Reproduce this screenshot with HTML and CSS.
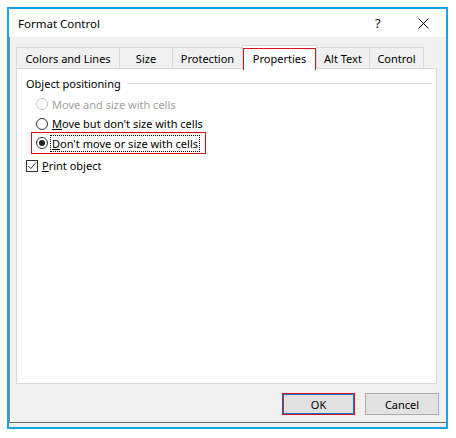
FILE: index.html
```html
<!DOCTYPE html>
<html>
<head>
<meta charset="utf-8">
<link rel="stylesheet" href="styles.css">
</head>
<body>
<div class="window">
  <div class="titlebar">
    <span class="title">Format Control</span>
    <span class="help">?</span>
    <span class="close"><svg width="11" height="11" viewBox="0 0 11 11"><path d="M0.5 0.5 L10.5 10.5 M10.5 0.5 L0.5 10.5" stroke="#000" stroke-width="1" fill="none"/></svg></span>
  </div>
  <div class="frame">
    <div class="tabs">
      <div class="tab t1">Colors and Lines</div>
      <div class="tab t2">Size</div>
      <div class="tab t3">Protection</div>
      <div class="tab active"><span class="mark">Properties</span></div>
      <div class="tab t5">Alt Text</div>
      <div class="tab t6">Control</div>
    </div>
    <div class="panel">
      <div class="group-head"><span>Object positioning</span><span class="rule"></span></div>
      <div class="opt disabled row1"><span class="radio"></span><span>Move and size with cells</span></div>
      <div class="opt row2"><span class="radio"></span><span><u>M</u>ove but don't size with cells</span></div>
      <div class="highlight"><span class="radio checked"></span><span class="focus"><u>D</u>on't move or size with cells</span></div>
      <div class="check-row"><span class="checkbox"><svg width="12" height="12" viewBox="0 0 12 12"><path d="M1.5 6 L4.5 9.2 L10.5 2" stroke="#222" stroke-width="1.1" fill="none"/></svg></span><span><u>P</u>rint object</span></div>
    </div>
    <div class="buttons">
      <button class="btn ok">OK</button>
      <button class="btn cancel">Cancel</button>
    </div>
  </div>
</div>
</body>
</html>
```
FILE: styles.css
```css
* { box-sizing: border-box; }
body {
  margin: 0;
  background: #fff;
  font-family: "Noto Sans", "Open Sans", sans-serif;
  font-size: 11px;
  color: #000;
}
.window {
  margin: 7px 0 0 7px;
  width: 441px;
  height: 422px;
  border: 2px solid #17a2e5;
  background: #f0f0f0;
  display: flex;
  flex-direction: column;
}
.titlebar {
  flex: none;
  height: 28px;
  background: #fff;
  display: flex;
  align-items: center;
}
.title {
  margin-left: 9px;
  font-size: 11.5px;
}
.help {
  margin-left: auto;
  font-size: 13px;
  width: 8px;
}
.close {
  display: flex;
  margin-left: 35px;
  margin-right: 17px;
}
.frame {
  flex: none;
  height: 386px;
  border-left: 1px solid #8c8c8c;
  border-bottom: 1px solid #6e6e6e;
  padding: 8px 7px 7px 6px;
  display: flex;
  flex-direction: column;
}
.tabs {
  display: flex;
  align-items: flex-end;
  height: 23px;
  flex: none;
}
.tab {
  height: 21px;
  border-top: 1px solid #d9d9d9;
  border-left: 1px solid #d9d9d9;
  display: flex;
  align-items: center;
  justify-content: center;
  background: #f0f0f0;
  white-space: nowrap;
}
.t1 { width: 103px; }
.t2 { width: 53px; }
.t3 { width: 70px; }
.active {
  width: 75px;
  height: 24px;
  margin-bottom: -1px;
  border-right: 1px solid #d9d9d9;
  background: #fff;
  position: relative;
  z-index: 1;
  align-items: flex-start;
  padding-top: 1px;
}
.mark {
  display: flex;
  align-items: center;
  justify-content: center;
  width: 73px;
  height: 22px;
  border: 1px solid #e0101a;
  border-bottom: none;
  margin-top: 1px;
  padding-bottom: 2px;
}
.t5 { width: 52px; border-left: none; }
.t6 { width: 55px; border-right: 1px solid #d9d9d9; }
.panel {
  flex: none;
  width: 421px;
  height: 316px;
  border: 1px solid #d9d9d9;
  background: #fff;
  padding: 6px 0 0 9px;
}
.group-head {
  display: flex;
  align-items: center;
  height: 16px;
}
.rule {
  flex: 1;
  height: 1px;
  background: #dcdcdc;
  margin-left: 6px;
  margin-right: 4px;
}
.opt {
  display: flex;
  align-items: center;
  margin-left: 10px;
}
.row1 { margin-top: 5px; height: 16px; }
.row2 { margin-top: 3px; height: 17px; }
.radio {
  flex: none;
  width: 12px;
  height: 12px;
  border: 1px solid #333;
  border-radius: 50%;
  background: #fff;
  margin-right: 4px;
  display: flex;
  align-items: center;
  justify-content: center;
}
.disabled { color: #a0a0a0; }
.disabled .radio { border-color: #c6c6c6; }
.checked::after {
  content: "";
  width: 6px;
  height: 6px;
  border-radius: 50%;
  background: #222;
}
.highlight {
  display: flex;
  width: fit-content;
  align-items: center;
  height: 22px;
  border: 1px solid #e0101a;
  margin-left: 5px;
  padding: 0 5px 0 4px;
}
.highlight .radio { margin-right: 2px; }
.focus {
  border: 1px dotted #000;
  padding: 0 1px;
  line-height: 15px;
}
.check-row {
  display: flex;
  align-items: center;
  height: 23px;
}
.checkbox {
  flex: none;
  width: 12px;
  height: 12px;
  border: 1px solid #333;
  margin-right: 4px;
  display: flex;
  align-items: center;
  justify-content: center;
  background: #fff;
}
.checkbox svg { display: block; }
.buttons {
  display: flex;
  justify-content: flex-end;
  gap: 10px;
  margin-top: 9px;
}
.btn {
  height: 22px;
  border: 1px solid #adadad;
  background: #e1e1e1;
  font-family: inherit;
  font-size: 11px;
  color: #000;
  padding: 0;
}
.ok {
  width: 73px;
  border-color: #e0101a;
  box-shadow: inset 0 0 0 1px #0078d7;
}
.cancel { width: 74px; }
```
